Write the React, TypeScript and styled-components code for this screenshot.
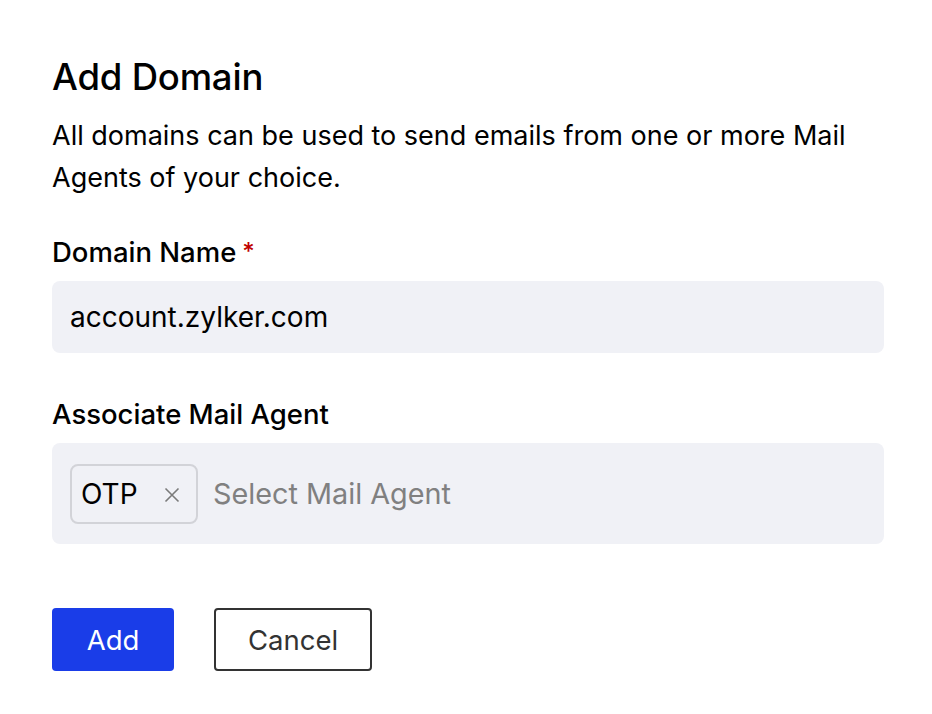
import React from "react";
import styled, { createGlobalStyle } from "styled-components";

const Global = createGlobalStyle`
  html, body { margin: 0; padding: 0; background: #ffffff; }
  body { font-family: Inter, "Noto Sans", sans-serif; color: #000; }
`;

const Page = styled.div`
  width: 932px;
  height: 714px;
  box-sizing: border-box;
  padding: 54px 48px 0 52px;
  display: flex;
  flex-direction: column;
`;

const Title = styled.h1`
  margin: 0;
  font-size: 36.5px;
  font-weight: 500;
  line-height: 46px;
  letter-spacing: -0.2px;
`;

const Description = styled.p`
  margin: 15px 0 0;
  font-size: 27px;
  line-height: 42px;
  font-weight: 400;
`;

const Field = styled.div<{ $top: number }>`
  margin-top: ${(p) => p.$top}px;
  display: flex;
  flex-direction: column;
  gap: 12px;
`;

const Label = styled.label`
  font-size: 27.5px;
  font-weight: 500;
  line-height: 34px;
  display: flex;
  align-items: flex-start;
`;

const Required = styled.span`
  color: #c00000;
  font-size: 24px;
  margin-left: 6px;
  margin-top: 3px;
  line-height: 28px;
`;

const Box = styled.div<{ $h: number }>`
  height: ${(p) => p.$h}px;
  background: #f0f1f6;
  border-radius: 8px;
  display: flex;
  align-items: center;
  padding: 0 18px;
  gap: 15px;
`;

const Value = styled.span`
  font-size: 28px;
  color: #000;
`;

const Chip = styled.div`
  height: 60px;
  width: 128px;
  box-sizing: border-box;
  border: 2px solid #d2d3d8;
  border-radius: 8px;
  display: flex;
  align-items: center;
  justify-content: space-between;
  padding: 0 16px 0 9px;
  font-size: 28px;
`;

const Close = styled.svg`
  width: 16px;
  height: 16px;
  display: block;
  margin-top: 2px;
`;

const Placeholder = styled.span`
  font-size: 28.8px;
  color: #808080;
`;

const Actions = styled.div`
  margin-top: 64px;
  display: flex;
  gap: 40px;
`;

const Button = styled.button<{ $primary?: boolean; $w: number }>`
  height: 63px;
  width: ${(p) => p.$w}px;
  box-sizing: border-box;
  padding: 0;
  border-radius: 4px;
  font-family: inherit;
  font-size: 27.5px;
  font-weight: 400;
  cursor: pointer;
  background: ${(p) => (p.$primary ? "#1a3de8" : "#ffffff")};
  color: ${(p) => (p.$primary ? "#ffffff" : "#333")};
  border: ${(p) => (p.$primary ? "none" : "2px solid #333")};
`;

export default function App() {
  return (
    <>
      <Global />
      <Page>
        <Title>Add Domain</Title>
        <Description>
          All domains can be used to send emails from one or more Mail
          <br />
          Agents of your choice.
        </Description>
        <Field $top={36}>
          <Label>
            Domain Name<Required>*</Required>
          </Label>
          <Box $h={72}>
            <Value>account.zylker.com</Value>
          </Box>
        </Field>
        <Field $top={44}>
          <Label>Associate Mail Agent</Label>
          <Box $h={101}>
            <Chip>
              <span>OTP</span>
              <Close viewBox="0 0 16 16" aria-label="Remove">
                <path
                  d="M1.5 1.5 L14.5 14.5 M14.5 1.5 L1.5 14.5"
                  stroke="#7a7a7a"
                  strokeWidth="1.6"
                  fill="none"
                />
              </Close>
            </Chip>
            <Placeholder>Select Mail Agent</Placeholder>
          </Box>
        </Field>
        <Actions>
          <Button $primary $w={122}>Add</Button>
          <Button $w={158}>Cancel</Button>
        </Actions>
      </Page>
    </>
  );
}
